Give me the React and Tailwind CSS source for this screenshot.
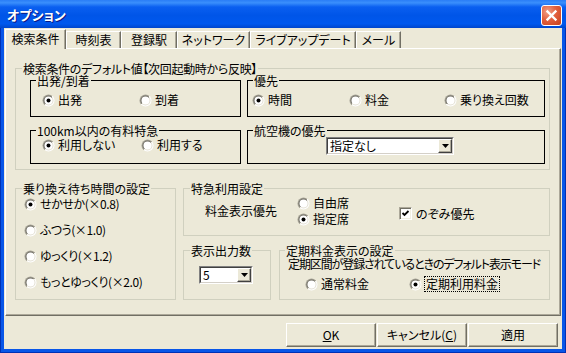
import React from "react";

function RadioIcon({ checked }) {
  return (
    <svg width="13" height="13" viewBox="0 0 13 13" className="shrink-0">
      <defs>
        <linearGradient id="rdo" x1="0" y1="0" x2="1" y2="1">
          <stop offset="0.5" stopColor="#a7a497" />
          <stop offset="0.5" stopColor="#ffffff" />
        </linearGradient>
        <linearGradient id="rdi" x1="0" y1="0" x2="1" y2="1">
          <stop offset="0.5" stopColor="#6f6d63" />
          <stop offset="0.5" stopColor="#e2dfd2" />
        </linearGradient>
      </defs>
      <circle cx="6.5" cy="6.5" r="6" fill="url(#rdo)" />
      <circle cx="6.5" cy="6.5" r="5" fill="url(#rdi)" />
      <circle cx="6.5" cy="6.5" r="4" fill="#ffffff" />
      {checked && <circle cx="6.5" cy="6.5" r="2" fill="#000000" />}
    </svg>
  );
}

function Radio({ checked, children, className = "" }) {
  return (
    <div className={`flex items-center h-[14px] ${className}`}>
      <RadioIcon checked={checked} />
      <span className="ml-[3px] whitespace-nowrap">{children}</span>
    </div>
  );
}

function CheckBox({ checked }) {
  return (
    <div className="w-[13px] h-[13px] shrink-0 border border-t-[#aca899] border-l-[#aca899] border-b-white border-r-white">
      <div className="w-full h-full bg-white shadow-[inset_1px_1px_0_#716f64,inset_-1px_-1px_0_#f1efe2]">
        {checked && (
          <svg width="11" height="11" viewBox="0 0 11 11">
            <path d="M2.5 5 L4.5 7 L8.5 3" stroke="#000" strokeWidth="1.8" fill="none" />
          </svg>
        )}
      </div>
    </div>
  );
}

function Combo({ value, className = "" }) {
  return (
    <div className={`flex h-[18px] border border-t-[#808080] border-l-[#808080] border-b-white border-r-white ${className}`}>
      <div className="flex flex-1 items-center bg-white border border-t-[#404040] border-l-[#404040] border-b-[#d4d0c8] border-r-[#d4d0c8]">
        <span className="flex-1 pl-[2px] leading-[14px] whitespace-nowrap">{value}</span>
        <div className="w-[14px] h-full flex items-center justify-center bg-[#ece9d8] border border-t-white border-l-white border-b-[#404040] border-r-[#404040] shadow-[inset_-1px_-1px_0_#aca899]">
          <svg width="7" height="4" viewBox="0 0 7 4">
            <path d="M0 0 H7 L3.5 4 Z" fill="#000" />
          </svg>
        </div>
      </div>
    </div>
  );
}

function Tab({ children, selected, className = "" }) {
  if (selected) {
    return (
      <div className={`relative z-10 h-[20px] mb-[-1px] flex items-center justify-center pb-[2px] bg-[#ece9d8] border-t border-l border-white border-r border-r-[#716f64] shadow-[inset_-1px_0_0_#aca899] ${className}`}>
        {children}
      </div>
    );
  }
  return (
    <div className={`h-[17px] flex items-center justify-center bg-[#ece9d8] border-t border-l border-white border-r border-r-[#716f64] shadow-[inset_-1px_0_0_#aca899] ${className}`}>
      {children}
    </div>
  );
}

function Button({ children }) {
  return (
    <div className="w-[90px] h-[24px] flex items-center justify-center bg-[#ece9d8] border border-t-white border-l-white border-b-[#716f64] border-r-[#716f64] shadow-[inset_-1px_-1px_0_#aca899]">
      {children}
    </div>
  );
}

export default function App() {
  return (
    <div className="w-[566px] h-[353px] flex flex-col overflow-hidden bg-[#0856e8] shadow-[inset_1px_0_0_#0031b5,inset_-1px_0_0_#0031b5,inset_0_-1px_0_#0031b5] text-[12px] leading-[14px] text-black [font-family:'Noto_Sans_CJK_JP',sans-serif] [font-feature-settings:'palt']">
      {/* Title bar */}
      <div className="h-[28px] shrink-0 flex pl-[7px] pr-[4px] bg-[linear-gradient(180deg,#2a7df6_0%,#3a8ffc_10%,#0a5ff0_25%,#0055e8_55%,#0058ee_85%,#0046cc_100%)]">
        <span className="mt-[8px] text-white font-bold text-[13px] leading-[14px] [text-shadow:1px_1px_0_#0a1883]">
          オプション
        </span>
        <div className="ml-auto mt-[5px] w-[21px] h-[21px] rounded-[3px] border border-white bg-[radial-gradient(circle_at_30%_30%,#f0a088_0%,#e2603e_45%,#c8401a_100%)] flex items-center justify-center">
          <svg width="13" height="13" viewBox="0 0 13 13">
            <path d="M2.5 2.5 L10.5 10.5 M10.5 2.5 L2.5 10.5" stroke="#ffffff" strokeWidth="2.4" strokeLinecap="square" />
          </svg>
        </div>
      </div>

      {/* Body */}
      <div className="mx-[4px] h-[321px] shrink-0 bg-[#ece9d8] flex flex-col">
        {/* Tabs */}
        <div className="h-[20px] flex items-end pl-[1px]">
          <Tab selected className="w-[61px]">検索条件</Tab>
          <Tab className="w-[55px]">時刻表</Tab>
          <Tab className="w-[56px]">登録駅</Tab>
          <Tab className="w-[73px]">ネットワーク</Tab>
          <Tab className="w-[106px]">ライブアップデート</Tab>
          <Tab className="w-[45px]">メール</Tab>
        </div>

        {/* Panel */}
        <div className="ml-[1px] w-[556px] h-[268px] border-t border-l border-white border-r border-b border-r-[#716f64] border-b-[#716f64] shadow-[inset_-1px_-1px_0_#aca899] flex flex-col">
          {/* Default conditions group */}
          <fieldset className="ml-[9px] mt-[13px] w-[535px] min-w-0 h-[108px] border border-[#d0d0bf]">
            <legend className="ml-[6px] px-[1px] leading-[13px] tracking-[-0.3px]">検索条件のデフォルト値【次回起動時から反映】</legend>
            <div className="pl-[14px] flex flex-col mt-[-1px]">
              <div className="flex">
                <fieldset className="w-[211px] min-w-0 shrink-0 h-[43px] border border-black">
                  <legend className="ml-[5px] px-[1px] leading-[13px]">出発/到着</legend>
                  <div className="flex pl-[11px] pt-[6px]">
                    <Radio checked className="w-[97px]">出発</Radio>
                    <Radio>到着</Radio>
                  </div>
                </fieldset>
                <fieldset className="ml-[6px] w-[298px] min-w-0 shrink-0 h-[43px] border border-black">
                  <legend className="ml-[5px] px-[1px] leading-[13px]">優先</legend>
                  <div className="flex pl-[4px] pt-[6px]">
                    <Radio checked className="w-[97px]">時間</Radio>
                    <Radio className="w-[95px]">料金</Radio>
                    <Radio>乗り換え回数</Radio>
                  </div>
                </fieldset>
              </div>
              <div className="flex mt-[7px]">
                <fieldset className="w-[211px] min-w-0 shrink-0 h-[40px] border border-black">
                  <legend className="ml-[5px] px-[1px] leading-[13px]">100km以内の有料特急</legend>
                  <div className="flex pl-[11px] pt-[1px]">
                    <Radio checked className="w-[99px]">利用しない</Radio>
                    <Radio>利用する</Radio>
                  </div>
                </fieldset>
                <fieldset className="ml-[6px] w-[298px] min-w-0 shrink-0 h-[40px] border border-black">
                  <legend className="ml-[5px] px-[1px] leading-[13px]">航空機の優先</legend>
                  <div className="pl-[78px]">
                    <Combo value="指定なし" className="w-[128px]" />
                  </div>
                </fieldset>
              </div>
            </div>
          </fieldset>

          {/* Lower section */}
          <div className="flex mt-[12px] ml-[9px]">
            <fieldset className="w-[161px] min-w-0 shrink-0 h-[118px] border border-[#d0d0bf]">
              <legend className="ml-[6px] px-[1px] leading-[13px]">乗り換え待ち時間の設定</legend>
              <div className="flex flex-col gap-[12px] pl-[8px] pt-[2px] tracking-[-0.4px]">
                <Radio checked>せかせか(×0.8)</Radio>
                <Radio>ふつう(×1.0)</Radio>
                <Radio>ゆっくり(×1.2)</Radio>
                <Radio>もっとゆっくり(×2.0)</Radio>
              </div>
            </fieldset>

            <div className="ml-[7px] w-[367px] shrink-0 flex flex-col">
              <fieldset className="w-[367px] min-w-0 h-[54px] border border-[#d0d0bf]">
                <legend className="ml-[6px] px-[1px] leading-[13px]">特急利用設定</legend>
                <div className="flex items-center pl-[21px] pt-[1px]">
                  <span className="w-[92px] whitespace-nowrap">料金表示優先</span>
                  <div className="w-[102px] flex flex-col gap-[2px]">
                    <Radio>自由席</Radio>
                    <Radio checked>指定席</Radio>
                  </div>
                  <div className="flex items-center mt-[5px]">
                    <CheckBox checked />
                    <span className="ml-[4px]">のぞみ優先</span>
                  </div>
                </div>
              </fieldset>

              <div className="flex mt-[8px]">
                <fieldset className="w-[88px] min-w-0 shrink-0 h-[56px] border border-[#d0d0bf]">
                  <legend className="ml-[6px] px-[1px] leading-[13px]">表示出力数</legend>
                  <div className="pl-[15px] pt-[9px]">
                    <Combo value="5" className="w-[54px]" />
                  </div>
                </fieldset>
                <fieldset className="ml-[8px] w-[271px] min-w-0 shrink-0 h-[56px] border border-[#d0d0bf]">
                  <legend className="ml-[5px] px-[1px] leading-[13px]">定期料金表示の設定</legend>
                  <div className="pl-[8px] whitespace-nowrap tracking-[-1.1px]">定期区間が登録されているときのデフォルト表示モード</div>
                  <div className="flex items-center pl-[25px] mt-[5px]">
                    <Radio className="w-[104px]">通常料金</Radio>
                    <div className="flex items-center">
                      <RadioIcon checked />
                      <span className="ml-[2px] px-[1px] border border-dotted border-black leading-[14px]">定期利用料金</span>
                    </div>
                  </div>
                </fieldset>
              </div>
            </div>
          </div>
        </div>

        {/* Buttons */}
        <div className="mt-[7px] flex justify-end gap-[1px] pr-[4px]">
          <Button><span><u>O</u>K</span></Button>
          <Button><span>キャンセル(<u>C</u>)</span></Button>
          <Button><span>適用</span></Button>
        </div>
      </div>
    </div>
  );
}
